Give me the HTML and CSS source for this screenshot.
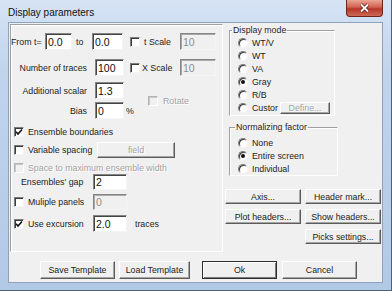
FILE: index.html
```html
<!DOCTYPE html>
<html lang="en">
<head>
<meta charset="UTF-8" />
<meta name="viewport" content="width=device-width, initial-scale=1" />
<title>Display parameters</title>
<link rel="stylesheet" href="styles.css">
</head>
<body>

<div class="window">
  <div class="titlebar">
    <span class="title">Display parameters</span>
    <span class="close">
      <svg width="11" height="10" viewBox="0 0 11 10"><path d="M2 1.5L9 8.5M9 1.5L2 8.5" stroke="#5a1a12" stroke-width="3.4"/><path d="M2 1.5L9 8.5M9 1.5L2 8.5" stroke="#fff" stroke-width="1.8"/></svg>
    </span>
  </div>

  <div class="client">
    <div class="main">

      <div class="panel">
        <div class="row r1">
          <label class="lbl from">From t=</label>
          <input class="edit w27" value="0.0">
          <label class="lbl to">to</label>
          <input class="edit w31" value="0.0">
          <span class="cb sc"></span>
          <label class="lbl scale">t Scale</label>
          <input class="edit w36" value="10" disabled>
        </div>

        <div class="row r2">
          <label class="lbl name">Number of traces</label>
          <input class="edit w29" value="100">
          <span class="cb sc2"></span>
          <label class="lbl scale xs">X Scale</label>
          <input class="edit w36" value="10" disabled>
        </div>

        <div class="row34">
          <div class="stack">
            <div class="row">
              <label class="lbl name">Additional scalar</label>
              <input class="edit w29" value="1.3">
            </div>
            <div class="row">
              <label class="lbl name">Bias</label>
              <input class="edit w29" value="0">
              <span class="unit">%</span>
            </div>
          </div>
          <span class="cb off rot"></span>
          <label class="lbl dim">Rotate</label>
        </div>

        <div class="row chk r5">
          <span class="cb"><svg width="8" height="8" viewBox="0 0 8 8"><path d="M1 3.8L3 6L7 1.5" fill="none" stroke="#111" stroke-width="1.6"/></svg></span>
          <label class="lbl">Ensemble boundaries</label>
        </div>

        <div class="row chk r6">
          <span class="cb"></span>
          <label class="lbl vs">Variable spacing</label>
          <button class="btn off field">field</button>
        </div>

        <div class="row chk r7">
          <span class="cb off"></span>
          <label class="lbl dim">Space to maximum ensemble width</label>
        </div>

        <div class="row r8">
          <label class="lbl gap">Ensembles' gap</label>
          <input class="edit w34" value="2">
        </div>

        <div class="row chk r9">
          <span class="cb"></span>
          <label class="lbl fix">Muliple panels</label>
          <input class="edit w34" value="0" disabled>
        </div>

        <div class="row chk r10">
          <span class="cb"><svg width="8" height="8" viewBox="0 0 8 8"><path d="M1 3.8L3 6L7 1.5" fill="none" stroke="#111" stroke-width="1.6"/></svg></span>
          <label class="lbl fix">Use excursion</label>
          <input class="edit w34" value="2.0">
          <span class="unit traces">traces</span>
        </div>
      </div>

      <div class="side">
        <fieldset class="group mode">
          <legend>Display mode</legend>
          <div class="opt"><span class="rb"></span>WT/V</div>
          <div class="opt"><span class="rb"></span>WT</div>
          <div class="opt"><span class="rb"></span>VA</div>
          <div class="opt"><span class="rb on"></span>Gray</div>
          <div class="opt"><span class="rb"></span>R/B</div>
          <div class="opt"><span class="rb"></span><span class="custor">Custor</span><button class="btn off define">Define...</button></div>
        </fieldset>

        <fieldset class="group norm">
          <legend>Normalizing factor</legend>
          <div class="opt"><span class="rb"></span>None</div>
          <div class="opt"><span class="rb on"></span>Entire screen</div>
          <div class="opt"><span class="rb"></span>Individual</div>
        </fieldset>

        <div class="tools">
          <button class="btn">Axis...</button>
          <button class="btn">Header mark...</button>
          <button class="btn">Plot headers...</button>
          <button class="btn">Show headers...</button>
          <button class="btn last">Picks settings...</button>
        </div>
      </div>

    </div>

    <div class="actions">
      <button class="btn save">Save Template</button>
      <button class="btn load">Load Template</button>
      <button class="btn ok">Ok</button>
      <button class="btn cancel">Cancel</button>
    </div>
  </div>
</div>

</body>
</html>
```

FILE: styles.css
```css
* { box-sizing: border-box; }
body {
  margin: 0;
  font-family: "Liberation Sans", Arial, sans-serif;
  font-size: 8.8px;
  color: #1c1c1c;
  background: #b9cde8;
}
.window {
  width: 392px;
  height: 291px;
  display: flex;
  flex-direction: column;
  background: linear-gradient(180deg, #d6e4f5 0%, #c0d4ec 25%, #b2c9e6 100%);
  border-right: 1px solid #4f607c;
  border-bottom: 1px solid #4f607c;
}
.titlebar {
  height: 22px;
  display: flex;
  justify-content: space-between;
  align-items: flex-start;
}
.title {
  font-size: 10px;
  line-height: 12px;
  padding: 7px 0 0 8px;
  color: #111;
}
.close {
  width: 37px;
  height: 17px;
  margin-right: 8px;
  display: flex;
  align-items: center;
  justify-content: center;
  border: 1px solid #6e241a;
  border-top: 0;
  border-radius: 0 0 4px 4px;
  background: linear-gradient(#eaa595, #d2604f 45%, #b8362a 55%, #cd6a57);
}
.client {
  margin-left: 8px;
  width: 375px;
  height: 261px;
  background: #f0f0f0;
  border: 1px solid #8ea2bd;
  display: flex;
  flex-direction: column;
}
.main {
  display: flex;
  height: 229px;
}

/* left panel */
.panel {
  margin: 1px 0 0 1px;
  width: 213px;
  height: 228px;
  padding-top: 8px;
  border: 1px solid #a0a0a0;
  border-right-color: #fff;
  border-bottom-color: #fff;
  box-shadow: inset 1px 1px 0 #fff;
  display: flex;
  flex-direction: column;
}
.row {
  display: flex;
  align-items: center;
  height: 17px;
}
.lbl { white-space: nowrap; }
.lbl.from { width: 34px; }
.lbl.to { width: 20px; padding-left: 4px; }
.lbl.scale { width: 40px; padding-left: 4px; }
.lbl.scale.xs { padding-left: 2px; }
.lbl.name { width: 76px; text-align: right; margin-right: 8px; }
.lbl.gap { width: 82px; padding-left: 10px; }
.lbl.vs { width: 69px; }
.lbl.fix { width: 65px; }
.dim { color: #a3a3a3; text-shadow: 1px 1px 0 #fff; }
.unit { margin-left: 2px; }
.unit.traces { margin-left: 8px; }

.r2 { margin-top: 9px; }
.row34 { display: flex; align-items: center; margin-top: 6px; }
.stack { width: 126px; display: flex; flex-direction: column; gap: 3px; }
.r5 { margin-top: 6px; height: 14px; }
.r6 { margin-top: 2px; }
.r7 { margin-top: 3px; height: 13px; }
.r8 { margin-top: 0; height: 16px; }
.r9 { margin-top: 4px; height: 16px; }
.r10 { margin-top: 5px; }

.edit {
  height: 17px;
  padding: 0 2px;
  font: 10.5px "Liberation Sans", Arial, sans-serif;
  color: #111;
  background: #fff;
  border: 1px solid #858585;
  border-right-color: #f4f4f4;
  border-bottom-color: #f4f4f4;
  box-shadow: inset 1px 1px 0 #444;
  outline: none;
}
.edit:disabled {
  background: #f0f0f0;
  color: #8e8e8e;
  box-shadow: inset 1px 1px 0 #a9a9a9;
}
.r8 .edit, .r9 .edit { height: 16px; }
.w27 { width: 27px; }
.w29 { width: 29px; }
.w31 { width: 31px; }
.w34 { width: 34px; }
.w36 { width: 36px; }

.cb {
  width: 10px;
  height: 10px;
  flex: none;
  display: flex;
  align-items: center;
  justify-content: center;
  background: #fff;
  border: 1px solid #7d7d7d;
  border-right-color: #f4f4f4;
  border-bottom-color: #f4f4f4;
  box-shadow: inset 1px 1px 0 #3a3a3a;
}
.cb.off {
  background: #f0f0f0;
  border-color: #b4b4b4 #fff #fff #b4b4b4;
  box-shadow: inset 1px 1px 0 #c8c8c8;
}
.cb.sc { margin-left: 7px; }
.cb.sc2 { margin-left: 6px; }
.cb.rot { margin-left: 11px; margin-right: 5px; }
.chk .cb { margin-left: 3px; margin-right: 4px; }

/* buttons */
.btn {
  padding: 0;
  font: 8.8px "Liberation Sans", Arial, sans-serif;
  color: #1c1c1c;
  background: #f0f0f0;
  border: 1px solid #fff;
  border-right-color: #5c5c5c;
  border-bottom-color: #5c5c5c;
  box-shadow: inset -1px -1px 0 #a5a5a5;
  white-space: nowrap;
}
.btn.off { color: #a3a3a3; text-shadow: 1px 1px 0 #fff; }
.field { width: 78px; height: 16px; }
.define { width: 50px; height: 12px; margin-left: 1px; }

/* right side */
.side {
  display: flex;
  flex-direction: column;
  align-items: flex-start;
  padding-top: 2px;
}
.group {
  margin: 0 0 0 6px;
  padding: 1px 0 1px 0;
  min-inline-size: 0;
  border: 1px solid #a0a0a0;
  border-right-color: #fff;
  border-bottom-color: #fff;
  box-shadow: inset 1px 1px 0 #fff, -1px -1px 0 0 transparent;
  outline: 1px solid transparent;
}
.group legend {
  line-height: 10px;
  padding: 0 1px;
  margin-left: 2px;
}
.mode { width: 106px; }
.norm { width: 109px; margin-top: 6px; padding-top: 4px; padding-bottom: 0; }
.norm legend { margin-left: 5px; }
.opt {
  display: flex;
  align-items: center;
  height: 13px;
  padding-left: 8px;
}
.custor { width: 27px; }
.rb {
  width: 10px;
  height: 10px;
  flex: none;
  margin-right: 4px;
  border-radius: 50%;
  background: #fff;
  border: 1px solid #7d7d7d;
  border-right-color: #f4f4f4;
  border-bottom-color: #f4f4f4;
  box-shadow: inset 1px 1px 0 #3a3a3a;
  display: flex;
  align-items: center;
  justify-content: center;
}
.rb.on::after {
  content: "";
  width: 4px;
  height: 4px;
  border-radius: 50%;
  background: #111;
}
.tools {
  display: grid;
  grid-template-columns: 76px 76px;
  grid-auto-rows: 15px;
  gap: 5px 4px;
  margin: 13px 0 0 2px;
}
.tools .last { grid-column: 2; }

/* bottom row */
.actions {
  display: flex;
  height: 18px;
  margin: 9px 0 0 31px;
}
.save { width: 75px; }
.load { width: 71px; margin-left: 4px; }
.ok { width: 75px; margin-left: 12px; border: 1px solid #2e2e2e; box-shadow: inset 1px 1px 0 #fff, inset -1px -1px 0 #7a7a7a; }
.cancel { width: 75px; margin-left: 5px; }
```
